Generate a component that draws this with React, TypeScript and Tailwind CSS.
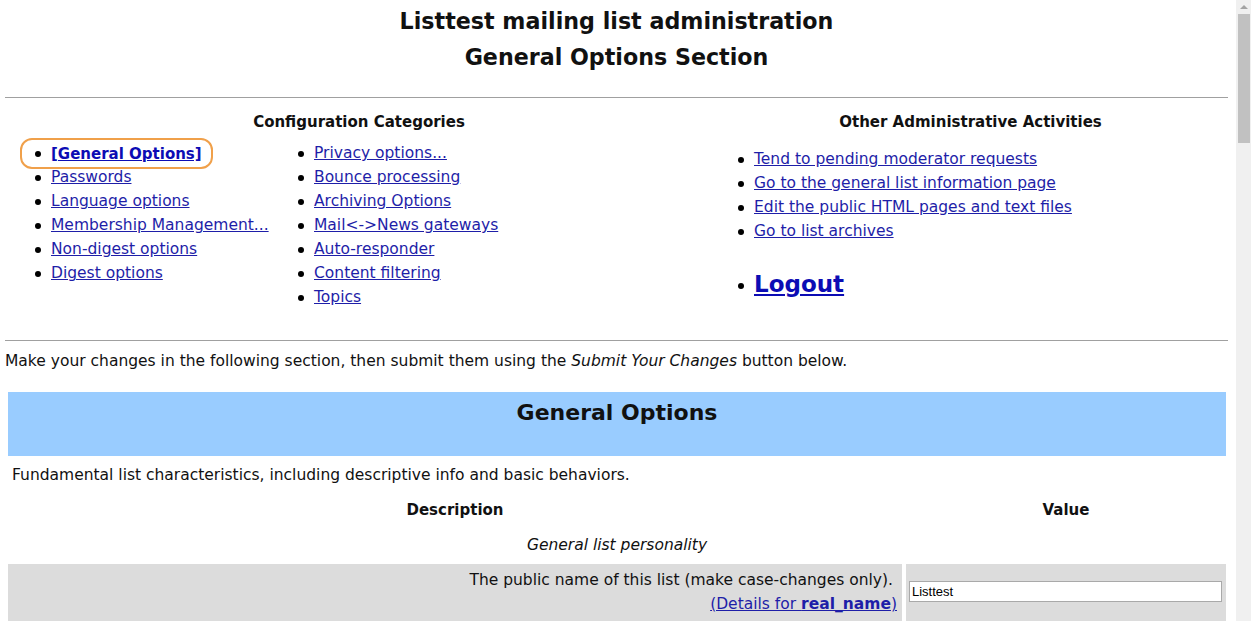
import React from 'react'

const linkCls = 'text-[#1e1ea8] underline'

const leftA = ['Passwords', 'Language options', 'Membership Management...', 'Non-digest options', 'Digest options']
const leftB = ['Privacy options...', 'Bounce processing', 'Archiving Options', 'Mail<->News gateways', 'Auto-responder', 'Content filtering', 'Topics']
const other = [
  'Tend to pending moderator requests',
  'Go to the general list information page',
  'Edit the public HTML pages and text files',
  'Go to list archives',
]

const Bullet: React.FC<{ children: React.ReactNode }> = ({ children }) => (
  <li className="flex items-center h-6 whitespace-nowrap">
    <span className="w-4 shrink-0 flex justify-start">
      <span className="w-[6px] h-[6px] rounded-full bg-black" />
    </span>
    {children}
  </li>
)

const App: React.FC = () => {
  return (
    <div className="flex h-screen overflow-hidden bg-white text-[15.5px] text-[#111]" style={{ fontFamily: '"DejaVu Sans", Verdana, sans-serif' }}>
      <div className="flex-1 overflow-hidden pl-[5px] pr-[8px] pt-[3px]">
        <div className="text-center font-bold text-[22.2px] leading-9">
          <h1>Listtest mailing list administration</h1>
          <h1>General Options Section</h1>
        </div>

        <div className="mt-[22px] border-t border-[#a0a0a0]" />

        <div className="flex pt-3 pb-[30px]">
          <div className="w-[708px]">
            <h2 className="text-center font-bold text-[15px] h-6 leading-6">Configuration Categories</h2>
            <div className="flex mt-[8px]">
              <ul className="w-[293px] pl-[30px]">
                <li className="flex items-center h-6 relative whitespace-nowrap">
                  <span className="absolute left-[-15px] top-[-4px] w-[193px] h-[31px] rounded-[12px] border-2 border-[#f0a04a]" />
                  <span className="w-4 flex">
                    <span className="w-[6px] h-[6px] rounded-full bg-black" />
                  </span>
                  <a className="text-[#0c0cb4] underline font-bold text-[15px]">[General Options]</a>
                </li>
                {leftA.map((t) => (
                  <Bullet key={t}>
                    <a className={linkCls}>{t}</a>
                  </Bullet>
                ))}
              </ul>
              <ul>
                {leftB.map((t) => (
                  <Bullet key={t}>
                    <a className={linkCls}>{t}</a>
                  </Bullet>
                ))}
              </ul>
            </div>
          </div>
          <div className="flex-1">
            <h2 className="text-center font-bold text-[15px] h-6 leading-6">Other Administrative Activities</h2>
            <ul className="mt-[14px] pl-[25px]">
              {other.map((t) => (
                <Bullet key={t}>
                  <a className={linkCls}>{t}</a>
                </Bullet>
              ))}
            </ul>
            <ul className="mt-[22px] pl-[25px]">
              <li className="flex items-center h-9">
                <span className="w-4 flex">
                  <span className="w-[6px] h-[6px] rounded-full bg-black mt-[3px]" />
                </span>
                <a className="text-[#0c0cb4] underline font-bold text-[23px]">Logout</a>
              </li>
            </ul>
          </div>
        </div>

        <div className="border-t border-[#a0a0a0]" />

        <p className="mt-[8px] leading-6">
          Make your changes in the following section, then submit them using the <i>Submit Your Changes</i> button below.
        </p>

        <div className="ml-[3px] mr-[2px] mt-[19px] flex flex-col">
          <div className="h-16 bg-[#99ccff] flex justify-center pt-[3px]">
            <h2 className="font-bold text-[22px] leading-9">General Options</h2>
          </div>
          <p className="pl-1 mt-[7px] leading-6">Fundamental list characteristics, including descriptive info and basic behaviors.</p>
          <div className="flex gap-1 mt-[11px] font-bold text-[15px] leading-6">
            <div className="w-[894px] text-center">Description</div>
            <div className="flex-1 text-center">Value</div>
          </div>
          <p className="text-center italic mt-[11px] leading-6">General list personality</p>
          <div className="flex gap-1 mt-[7px]">
            <div className="w-[894px] bg-[#dcdcdc] text-right pr-[9px] pt-[4px] pb-4 leading-6">
              <p>The public name of this list (make case-changes only).</p>
              <p className="-mr-1">
                <a className={linkCls}>
                  (Details for <b>real_name</b>)
                </a>
              </p>
            </div>
            <div className="flex-1 bg-[#dcdcdc] pl-[3px] pr-[4px] pt-[16px]">
              <input
                type="text"
                readOnly
                value="Listtest"
                className="w-full h-[21px] border border-[#a9a9a9] bg-white px-[2px] text-[13px] text-black outline-none"
                style={{ fontFamily: '"Liberation Sans", Arial, sans-serif' }}
              />
            </div>
          </div>
        </div>
      </div>

      <div className="w-[15px] bg-[#f0f0f0] flex flex-col items-center">
        <div className="h-[14px] flex items-center justify-center">
          <span className="w-0 h-0 border-l-[4px] border-r-[4px] border-b-[4px] border-l-transparent border-r-transparent border-b-[#a3a3a3]" />
        </div>
        <div className="w-[12px] h-[129px] bg-[#c1c1c1]" />
      </div>
    </div>
  )
}

export default App
